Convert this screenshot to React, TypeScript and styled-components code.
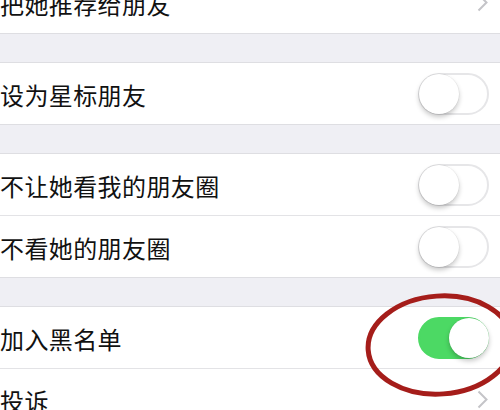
import React from "react";
import styled, { createGlobalStyle } from "styled-components";

const Global = createGlobalStyle`
  html, body { margin: 0; padding: 0; background: #efeff4; overflow: hidden; }
  body { font-family: "Noto Sans CJK SC", "Noto Sans", sans-serif; }
`;

const Page = styled.div`
  position: relative;
  width: 500px;
  height: 410px;
  overflow: hidden;
  background: #efeff4;
`;

const List = styled.div`
  display: flex;
  flex-direction: column;
  margin-top: -29px;
`;

const Group = styled.div`
  display: flex;
  flex-direction: column;
  background: #fff;
  border-top: 1px solid #dedee2;
  border-bottom: 1px solid #dedee2;
`;

const Gap = styled.div`
  height: 28px;
`;

const Row = styled.div<{ $divider?: boolean }>`
  position: relative;
  display: flex;
  align-items: center;
  justify-content: space-between;
  height: 61px;
  padding: 0 11px 0 0;
  border-top: ${(p) => (p.$divider ? "1px solid #e3e3e6" : "none")};
`;

const Label = styled.span`
  font-size: 24px;
  letter-spacing: 0.4px;
  color: #111;
  line-height: 1;
  padding-top: 3px;
  margin-left: 0px;
`;

const Track = styled.div<{ $on?: boolean }>`
  position: relative;
  width: 71px;
  height: 42px;
  border-radius: 21px;
  box-sizing: border-box;
  background: ${(p) => (p.$on ? "#4cd964" : "#fff")};
  border: 2px solid ${(p) => (p.$on ? "#4cd964" : "#e6e6e8")};
`;

const Knob = styled.div<{ $on?: boolean }>`
  position: absolute;
  top: -1px;
  left: ${(p) => (p.$on ? "29px" : "-1px")};
  width: 40px;
  height: 40px;
  border-radius: 50%;
  background: #fff;
  box-shadow: 0 3px 5px rgba(0, 0, 0, 0.22), 0 0 0 0.5px rgba(0, 0, 0, 0.08);
`;

const Chevron = styled.svg`
  width: 11px;
  height: 19px;
  margin-right: 1px;
`;

const Circle = styled.svg`
  position: absolute;
  left: 360px;
  top: 290px;
  width: 150px;
  height: 115px;
  pointer-events: none;
`;

const Toggle = ({ on }: { on?: boolean }) => (
  <Track $on={on}>
    <Knob $on={on} />
  </Track>
);

const Arrow = () => (
  <Chevron viewBox="0 0 11 19">
    <path d="M1.5 1.5 L9.5 9.5 L1.5 17.5" fill="none" stroke="#c4c4c8" strokeWidth="2" />
  </Chevron>
);

export default function App() {
  return (
    <>
      <Global />
      <Page>
        <List>
          <Group>
            <Row>
              <Label>把她推荐给朋友</Label>
              <Arrow />
            </Row>
          </Group>
          <Gap />
          <Group>
            <Row>
              <Label>设为星标朋友</Label>
              <Toggle />
            </Row>
          </Group>
          <Gap />
          <Group>
            <Row>
              <Label>不让她看我的朋友圈</Label>
              <Toggle />
            </Row>
            <Row $divider>
              <Label>不看她的朋友圈</Label>
              <Toggle />
            </Row>
          </Group>
          <Gap />
          <Group>
            <Row>
              <Label>加入黑名单</Label>
              <Toggle on />
            </Row>
            <Row $divider>
              <Label>投诉</Label>
              <Arrow />
            </Row>
          </Group>
        </List>
        <Circle viewBox="0 0 150 115">
          <ellipse
            cx="80"
            cy="55"
            rx="72"
            ry="49"
            transform="rotate(-4 80 55)"
            fill="none"
            stroke="#a51d1a"
            strokeWidth="5"
          />
        </Circle>
      </Page>
    </>
  );
}
